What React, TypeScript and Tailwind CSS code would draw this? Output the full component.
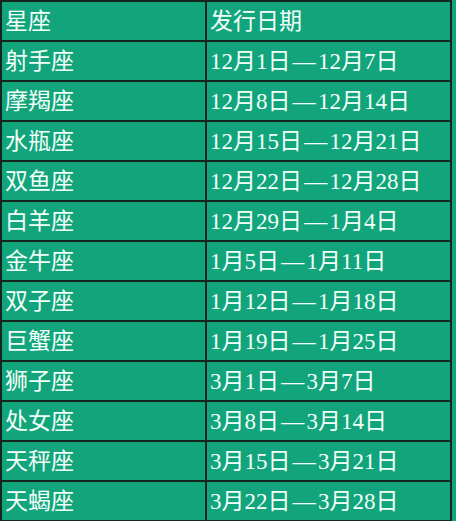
const rows: [string, string][] = [
  ["射手座", "12月1日—12月7日"],
  ["摩羯座", "12月8日—12月14日"],
  ["水瓶座", "12月15日—12月21日"],
  ["双鱼座", "12月22日—12月28日"],
  ["白羊座", "12月29日—1月4日"],
  ["金牛座", "1月5日—1月11日"],
  ["双子座", "1月12日—1月18日"],
  ["巨蟹座", "1月19日—1月25日"],
  ["狮子座", "3月1日—3月7日"],
  ["处女座", "3月8日—3月14日"],
  ["天秤座", "3月15日—3月21日"],
  ["天蝎座", "3月22日—3月28日"],
];

// the dash in the picture sits in a full-width slot
function DateText({ text }: { text: string }) {
  const [from, to] = text.split("—");
  return (
    <>
      {from}
      <span className="inline-block w-[1.2em] text-center">—</span>
      {to}
    </>
  );
}

export default function App() {
  const cell =
    "h-10 border-2 border-[#16251f] pl-[3px] text-left align-middle font-normal";
  return (
    <div className="h-[521px] w-[456px] overflow-hidden bg-[#12a57c]">
      <table
        className="border-collapse text-[23px] leading-none text-[#f2fff9]"
        style={{ fontFamily: '"Liberation Serif", "Noto Sans CJK SC", serif' }}
      >
        <thead>
          <tr>
            <th className={`${cell} w-[205px]`}>星座</th>
            <th className={`${cell} w-[245px]`}>发行日期</th>
          </tr>
        </thead>
        <tbody>
          {rows.map(([sign, date]) => (
            <tr key={sign}>
              <td className={cell}>{sign}</td>
              <td className={cell}>
                <DateText text={date} />
              </td>
            </tr>
          ))}
        </tbody>
      </table>
    </div>
  );
}
